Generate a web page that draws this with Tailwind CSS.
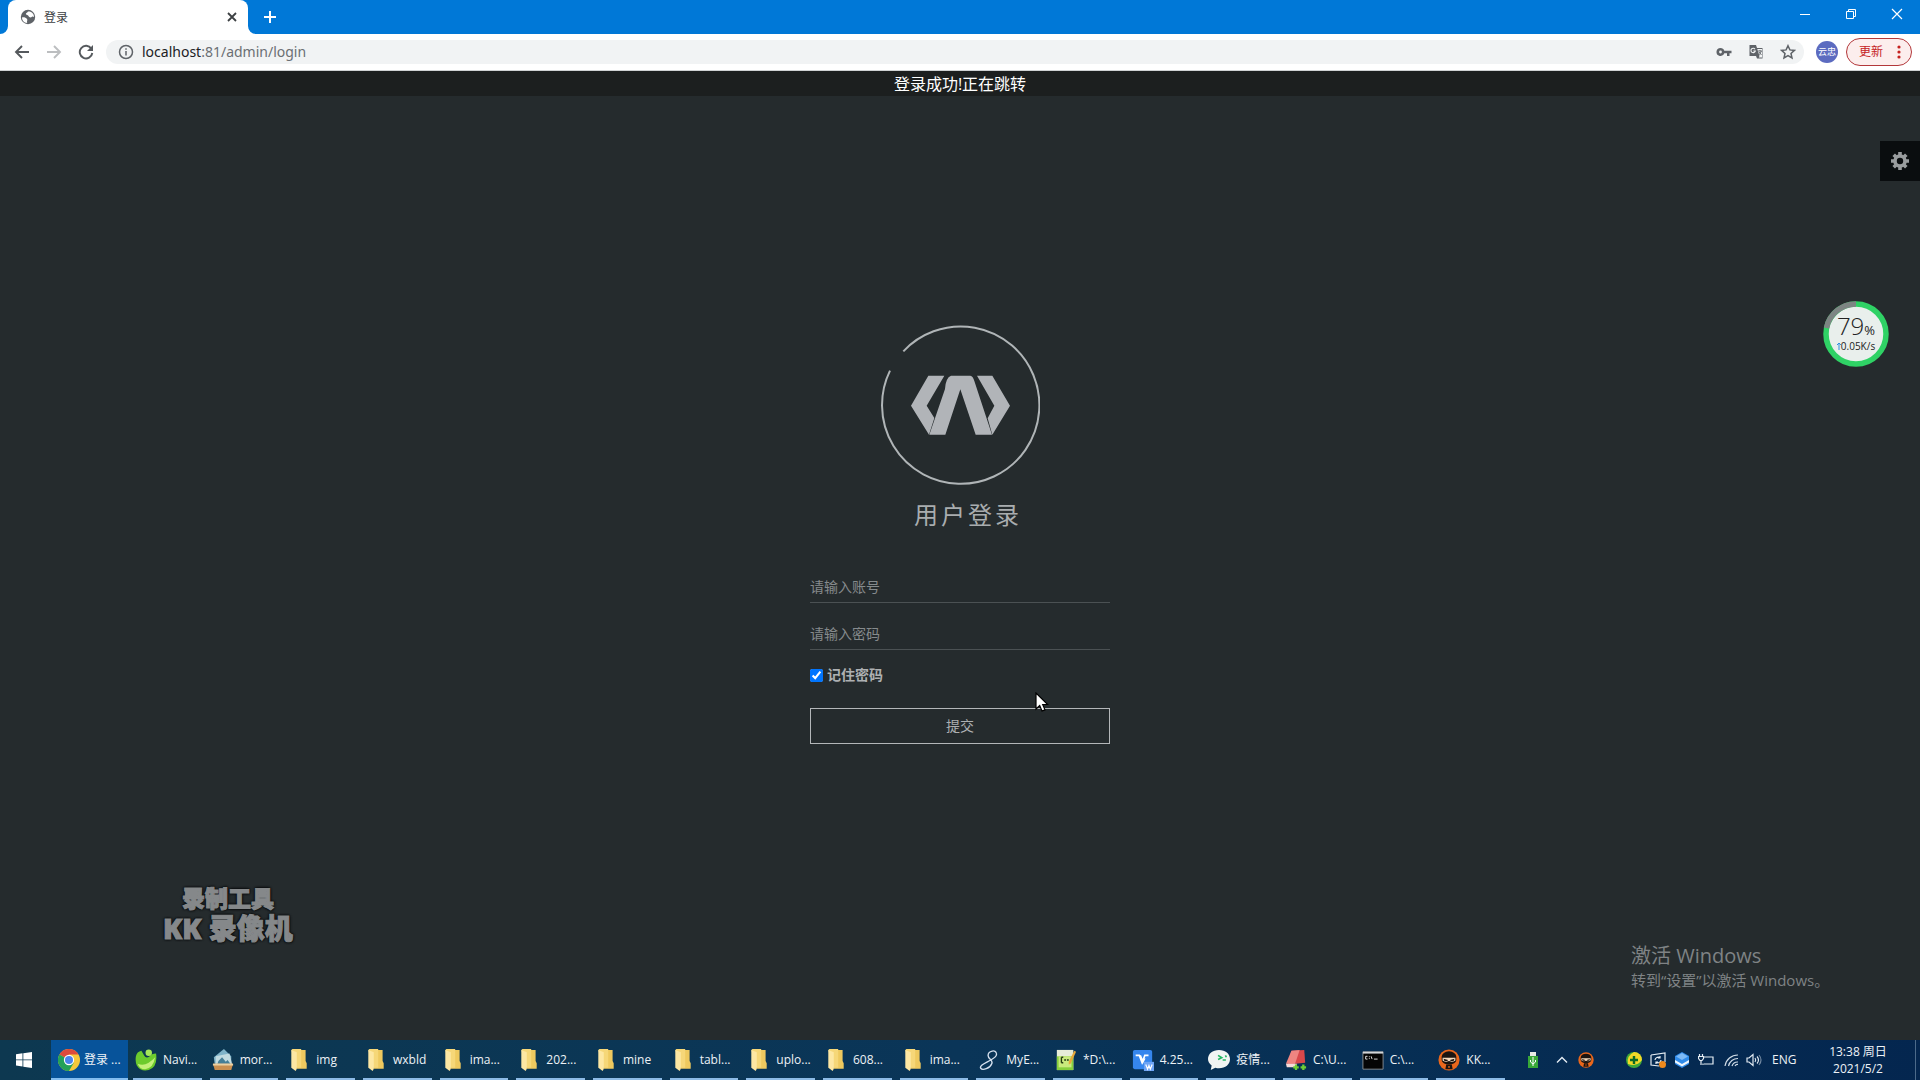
<!DOCTYPE html>
<html lang="zh-CN">
<head>
<meta charset="utf-8">
<title>登录</title>
<script src="https://cdn.jsdelivr.net/npm/@tailwindcss/browser@4"></script>
</head>
<body class="flex h-screen flex-col overflow-hidden bg-[#252b2d] font-['Open_Sans','Noto_Sans_CJK_SC',sans-serif]">

<svg class="hidden">
  <symbol id="folder" viewBox="0 0 14 20">
    <path d="M1 1h12v10l1 2v5H5z" fill="#eec95f"/>
    <path d="M0 1l1-1h8v17l-5 0z" fill="#f6d778"/>
    <path d="M0 1l5 2v15l-1 2-4-3z" fill="#fde7a3"/>
  </symbol>
  <symbol id="ninja" viewBox="0 0 24 24">
    <circle cx="12" cy="12" r="11.500" fill="#e9671c"/>
    <path d="M4 8.500a8 6 0 0 1 16 0v3.500a8 5 0 0 1-16 0z" fill="#1b1410"/>
    <path d="M5 9.500h14v3q-2 1.500-4 1.500l-3-1-3 1q-2 0-4-1.500z" fill="#f3d9bd"/>
    <path d="M6 10.500l5 1.500-1 1H7zM18 10.500l-5 1.500 1 1h3z" fill="#1b1410"/>
    <path d="M9 17h6l1 5H8z" fill="#1b1410"/>
    <circle cx="12" cy="19.500" r="1" fill="#e9671c"/>
  </symbol>
</svg>

<header>
  <div class="flex h-[34px] items-stretch bg-[#0078d7] pl-2">
    <div class="relative flex w-60 items-center rounded-t-lg bg-white pr-2 pl-3">
      <svg class="absolute bottom-0 -left-2 size-2" viewBox="0 0 8 8"><path d="M8 0v8H0a8 8 0 0 0 8-8" fill="#fff"/></svg>
      <svg class="absolute -right-2 bottom-0 size-2" viewBox="0 0 8 8"><path d="M0 0v8h8a8 8 0 0 1-8-8" fill="#fff"/></svg>
      <svg class="size-4" viewBox="0 0 16 16"><circle cx="8" cy="8" r="7.200" fill="#5f6368"/><path d="M2 8.500c2-.5 4 .2 5 1.500 1 1-.5 2 .2 4C4 13.800 2 11.500 2 8.500M8 2.500c-.5 1.500-2 1-2.200 2.500C6 6.200 8 5.500 8.500 7c.4 1.500 2.500 2 3.500.8.700-.8 1.500-.3 2 .2.200-3-2.500-6-6-5.500" fill="#fff"/></svg>
      <span class="flex-1 pt-0.5 pl-2 text-xs text-[#3c4043]">登录</span>
      <button aria-label="关闭标签页" class="flex size-4 items-center justify-center"><svg class="size-4" viewBox="0 0 16 16" fill="none" stroke="#3c4043" stroke-width="1.800"><path d="M4 4l8 8M12 4l-8 8"/></svg></button>
    </div>
    <button aria-label="新标签页" class="ml-3.5 flex w-4 items-center"><svg class="size-4" viewBox="0 0 16 16" stroke="#fff" stroke-width="2"><path d="M8 2v12M2 8h12"/></svg></button>
    <div class="ml-auto flex">
      <button aria-label="最小化" class="flex w-[46px] items-center justify-center pb-1.5"><svg class="size-3" viewBox="0 0 12 12" stroke="#fff"><path d="M1 6.500h10"/></svg></button>
      <button aria-label="还原" class="flex w-[46px] items-center justify-center pb-1.5"><svg class="size-3" viewBox="0 0 12 12" fill="none" stroke="#fff"><path d="M1.500 3.500h7v7h-7zM3.500 3.500v-2h7v7h-2"/></svg></button>
      <button aria-label="关闭" class="flex w-[46px] items-center justify-center pb-1.5"><svg class="size-3" viewBox="0 0 12 12" stroke="#fff" stroke-width="1.200"><path d="M1 1l10 10M11 1L1 11"/></svg></button>
    </div>
  </div>
  <div class="flex h-[37px] items-center gap-4 border-b border-[#cfd2d3] bg-white pr-2 pl-3.5">
    <button aria-label="后退"><svg class="size-4" viewBox="0 0 16 16" fill="none" stroke="#55595d" stroke-width="1.900"><path d="M15 8H2.500M8 2L2 8l6 6"/></svg></button>
    <button aria-label="前进"><svg class="size-4" viewBox="0 0 16 16" fill="none" stroke="#bcbec0" stroke-width="1.900"><path d="M1 8h12.500M8 2l6 6-6 6"/></svg></button>
    <button aria-label="重新加载"><svg class="size-4" viewBox="0 0 16 16"><path d="M13.300 4.600A6.300 6.300 0 1 0 14.300 9" fill="none" stroke="#55595d" stroke-width="1.900"/><path d="M15 1v6H9z" fill="#55595d"/></svg></button>
    <div class="-ml-1 flex h-6 flex-1 items-center rounded-full bg-[#f1f3f4] pr-2 pl-3">
      <svg class="mr-2 size-4" viewBox="0 0 16 16" fill="none" stroke="#5f6368" stroke-width="1.500"><circle cx="8" cy="8" r="6.500"/><path d="M8 7v4.500M8 4.200v1.600"/></svg>
      <span class="flex-1 font-['Noto_Sans',sans-serif] text-sm text-[#6b6f73]"><span class="text-[#202124]">localhost</span>:81/admin/login</span>
      <div class="flex items-center gap-4">
        <svg class="size-4" viewBox="0 0 16 16"><path d="M4.500 4a4 4 0 1 0 3.800 5.200H11V12h2.500V9.200H15.500V6.800H8.300A4 4 0 0 0 4.500 4m0 2.600a1.400 1.400 0 1 1 0 2.800 1.400 1.400 0 0 1 0-2.800" fill="#5f6368"/></svg>
        <svg class="size-4" viewBox="0 0 16 16"><path d="M1.500 1H8l1 3h5.500v10.500H9L8 12H1.500z" fill="#5f6368"/><path d="M9.300 5H14v8.500h-3.200L11.500 12z" fill="#f1f3f4"/><path d="M7 5.200A2.200 2.200 0 1 0 7.300 7H5.300" fill="none" stroke="#f1f3f4" stroke-width="1.100"/><path d="M10 7h4M12 6v1M13.300 7q-.6 2.500-2.600 4M11 8l2.500 3" fill="none" stroke="#5f6368" stroke-width=".9"/></svg>
        <svg class="size-4" viewBox="0 0 16 16" fill="none" stroke="#5f6368" stroke-width="1.500"><path d="M8 1.700l1.900 4.200 4.500.5-3.400 3.100 1 4.500L8 11.700 4 14l1-4.500L1.600 6.400l4.500-.5z"/></svg>
      </div>
    </div>
    <div class="-ml-1 flex items-center gap-2">
      <span class="flex size-[22px] items-center justify-center rounded-full bg-[#5c6bc0] text-[9px] text-white">云忠</span>
      <button class="flex h-7 w-[66px] items-center justify-between rounded-full border border-[#b3373a] bg-[#fceeed] pr-2.5 pl-3 text-xs text-[#c5221f]">更新
        <svg class="h-4 w-1" viewBox="0 0 4 16" fill="#c5221f"><circle cx="2" cy="3" r="1.600"/><circle cx="2" cy="8" r="1.600"/><circle cx="2" cy="13" r="1.600"/></svg>
      </button>
    </div>
  </div>
</header>

<main class="relative flex-1 text-[#adb0b2]">
  <p class="flex h-[25px] items-center justify-center bg-[#1c1f1f] text-base leading-none text-white">登录成功!正在跳转</p>

  <form class="mx-auto flex w-[300px] flex-col items-stretch pt-[229px] text-sm">
    <svg class="size-40 self-center" viewBox="271 75 480 480">
      <path d="M343 151A236 236 0 1 1 303 209" fill="none" stroke="#b0b5b7" stroke-width="6" transform="translate(-2 3)"/>
      <g fill="#b1b4b8">
        <path d="M416 227h48l-53 90 23 37-16 50-54-87z"/>
        <path d="M466 267q2-34 18-40h58q8 1 12 16l53 161h-49l-46-136-45 136h-48z"/>
        <path d="M562 227h46l53 90-53 87-14-49 20-38z"/>
      </g>
    </svg>
    <h1 class="mt-3 pl-4 text-center text-2xl leading-9 font-normal tracking-[3px] text-[#a9adaf]">用户登录</h1>
    <input type="text" aria-label="账号" placeholder="请输入账号" class="mt-[38px] h-8 border-b border-[#4b5153] bg-transparent outline-none placeholder:text-[#858a8c]">
    <input type="password" aria-label="密码" placeholder="请输入密码" class="mt-[15px] h-8 border-b border-[#4b5153] bg-transparent outline-none placeholder:text-[#858a8c]">
    <div class="mt-[15px] flex h-5 items-center gap-1">
      <input id="remember" type="checkbox" checked class="size-[13px] accent-[#0075ff]">
      <label for="remember" class="font-bold">记住密码</label>
    </div>
    <button type="button" class="mt-[23px] h-9 border border-[#b4b7b9]">提交</button>
  </form>

  <button aria-label="设置" class="absolute top-[70px] right-0 flex size-10 items-center justify-center bg-[#0a0d0f]">
    <svg class="size-[18px]" viewBox="0 0 18 18"><circle cx="9" cy="9" r="5" fill="none" stroke="#999c9e" stroke-width="3.600"/><path d="M9 0v4M9 14v4M0 9h4M14 9h4M2.700 2.700l2.600 2.600M12.700 12.700l2.600 2.600M15.300 2.700l-2.600 2.600M5.300 12.700l-2.600 2.600" stroke="#999c9e" stroke-width="3.600"/></svg>
  </button>

  <div class="absolute top-[230px] right-[31px] flex size-[66px] flex-col items-center justify-center text-[#222]">
    <svg class="absolute inset-0 size-full" viewBox="0 0 66 66"><circle cx="33" cy="33" r="30" fill="#e9efec" stroke="#2fd265" stroke-width="5.500"/><path d="M3.500 27A30 30 0 0 1 33 3" fill="none" stroke="#7d8583" stroke-width="5.500"/></svg>
    <div class="relative flex items-baseline leading-none"><span class="text-2xl leading-6 font-light">79</span><span class="text-[13px]">%</span></div>
    <div class="relative flex items-center text-[10px] leading-4"><svg class="h-2 w-1" viewBox="0 0 4 8" stroke="#2f8fe0" fill="none"><path d="M2 8V1M0 3l2-2 2 2"/></svg>0.05K/s</div>
  </div>

  <div class="absolute bottom-24 left-[163px] text-center font-black text-[#85888a] [-webkit-text-stroke:1px_#85888a] [text-shadow:1px_1px_2px_#0c0f10,-1px_-1px_2px_#0c0f10,1px_-1px_2px_#0c0f10,-1px_1px_2px_#0c0f10]">
    <div class="text-[23px] leading-7">录制工具</div>
    <div class="text-[28px] leading-8">KK 录像机</div>
  </div>

  <div class="absolute right-[89px] bottom-[50px] w-[200px] text-[#7f8385]">
    <div class="text-xl leading-7">激活 Windows</div>
    <div class="text-[15px] leading-5">转到“设置”以激活 Windows。</div>
  </div>

  <svg class="absolute top-[621px] left-1/2 ml-[75px] h-5 w-3.5" viewBox="0 0 14 20"><path d="M1 1v16l3.700-3.500L7 19l3-1.200L7.700 12.500h5z" fill="#fff" stroke="#000" stroke-width="1.200"/></svg>
</main>

<footer class="flex h-10 items-stretch bg-linear-to-r from-[#0d3850] via-[#0a3558] to-[#04264f] text-xs text-[#edf2f6]">
  <button aria-label="开始" class="flex w-[51px] items-center justify-center pr-1"><svg class="size-4" viewBox="0 0 16 16" fill="#fff"><path d="M0 2.200l6.500-.9v6.200H0zM7.300 1.200L16 0v7.500H7.300zM0 8.300h6.500v6.200L0 13.600zM7.300 8.300H16V16l-8.700-1.200z"/></svg></button>
  <button class="mr-[5px] flex w-[77px] items-center gap-1 border-b-2 border-[#83bdf0] bg-[#07539a] pt-0.5 pl-[7px]">
    <svg class="size-[22px]" viewBox="0 0 24 24"><circle cx="12" cy="12" r="12" fill="#f5c83a"/><path d="M12 12L1.600 6A12 12 0 0 1 22.400 6H12z" fill="#db4a3d"/><path d="M1.600 6A12 12 0 0 0 12 24l5.200-9L12 12z" fill="#23a15a"/><circle cx="12" cy="12" r="5.600" fill="#fff"/><circle cx="12" cy="12" r="4.400" fill="#4a84ee"/></svg>
    登录 ...
  </button>
  <nav class="grid w-[1372px] shrink grid-cols-18 gap-2 *:flex *:min-w-0 *:items-center *:gap-1.5 *:border-b-2 *:border-[#8dbbe6] *:pt-0.5 *:pl-0.5 *:whitespace-nowrap [&_svg]:h-[22px] [&_svg]:w-[22px] [&_svg]:shrink-0">
    <button><svg viewBox="0 0 24 24"><path d="M1 8q1-5 6-6l3 5q2 4 6 1 2-3 7-3 2 15-8 18-9 2-13-5-2-5-1-10" fill="#6ccb2d"/><path d="M3 16q9 4 19-7-2 12-11 13-6 0-8-6" fill="#c3f07a"/><circle cx="15" cy="4" r="3.500" fill="#a5e65a"/></svg>Navi...</button>
    <button><svg viewBox="0 0 24 24"><path d="M2 9L13 0l8 8v9H3z" fill="#7fb3c8"/><path d="M4 8l15-3 3 12H4z" fill="#c2dbe0"/><path d="M7 13l4-4 4 5 2-2 3 4H6z" fill="#457f97"/><path d="M1 16h22l-2 7H3z" fill="#c98f50"/><path d="M1 16h22v2H1z" fill="#ecd0a0"/></svg>mor...</button>
    <button><svg><use href="#folder"/></svg>img</button>
    <button><svg><use href="#folder"/></svg>wxbld</button>
    <button><svg><use href="#folder"/></svg>ima...</button>
    <button><svg><use href="#folder"/></svg>202...</button>
    <button><svg><use href="#folder"/></svg>mine</button>
    <button><svg><use href="#folder"/></svg>tabl...</button>
    <button><svg><use href="#folder"/></svg>uplo...</button>
    <button><svg><use href="#folder"/></svg>608...</button>
    <button><svg><use href="#folder"/></svg>ima...</button>
    <button><svg viewBox="0 0 24 24" fill="none" stroke="#d5e0ee" stroke-width="1.500"><path d="M20 5c0-5-9-3-9 2 0 4 6 5 4 9-2 5-10 8-12 5s6-6 11-9 7-5 6-7"/></svg>MyE...</button>
    <button><svg viewBox="0 0 24 24"><path d="M2 1h18v22H2z" fill="#e6ecd8"/><path d="M2 8h18v15H2z" fill="#86cf3c"/><path d="M4 8h14v12H4z" fill="#c9ea7d"/><path d="M7 9v6M7 9h2M7 15h2M10 12h2M13 12h2" stroke="#243b12" stroke-width="1.500"/><path d="M21 2l2 1-6 13-2 1v-3z" fill="#e8a93a"/></svg>*D:\...</button>
    <button><svg viewBox="0 0 24 24"><rect x="1" y="1" width="21" height="21" rx="2" fill="#3586ee"/><path d="M4 7h4l3 8 3-8h4M9 7l3 7 2-4" fill="none" stroke="#fff" stroke-width="1.800"/><rect x="13" y="14" width="11" height="10" fill="#6ea4f4"/><path d="M15 17l2 5 1.500-4 1.500 4 2-5" fill="none" stroke="#fff" stroke-width="1.300"/></svg>4.25...</button>
    <button><svg viewBox="0 0 24 24"><path d="M12 1c7 0 12 4 12 10s-5 10-12 10q-2 0-4-.6L3 23l1-5Q0 15 0 11C0 5 5 1 12 1" fill="#f2f5f4"/><path d="M11 7l4 2.500-4 2M16 12h3.500M19 7l1 2" fill="none" stroke="#25b864" stroke-width="1.800"/></svg>疫情...</button>
    <button><svg viewBox="0 0 24 24"><path d="M7 2l14-1 1 14-19 2z" fill="#d9484b"/><path d="M7 2l9-1-5 15H1z" fill="#ef8581"/><path d="M1 16h12l-1 4H2z" fill="#f5dada"/><path d="M9 20h6M12 17v6M17 20h6M20 17v6" stroke="#6fce35" stroke-width="2.500"/></svg>C:\U...</button>
    <button><svg viewBox="0 0 24 24"><path d="M1 3h22v19H1z" fill="#050505" stroke="#8b9095"/><path d="M1 3h22v2H1z" fill="#d3d6d9"/><path d="M6 8H4v3h2M8 8v1M8 10v1M10 8l1 3M13 11h4" fill="none" stroke="#e9e9e9"/></svg>C:\...</button>
    <button><svg><use href="#ninja"/></svg>KK...</button>
  </nav>

  <div class="ml-auto flex items-center">
    <svg class="mr-[18px] h-4 w-2.5" viewBox="0 0 10 16"><path d="M2 0h6v4H2z" fill="#e6ebe6"/><path d="M0 4h10v12H0z" fill="#38a838"/><path d="M5 5v9M2.500 8v2L5 12l2.500-2V8" fill="none" stroke="#fff"/></svg>
    <svg class="mr-2.5 h-4 w-3" viewBox="0 0 12 16" fill="none" stroke="#e5edf4" stroke-width="1.400"><path d="M1 10.500l5-5 5 5"/></svg>
    <svg class="mr-8 size-4"><use href="#ninja"/></svg>
    <svg class="mr-2 size-4" viewBox="0 0 16 16"><circle cx="8" cy="8" r="8" fill="#3fa83a"/><path d="M8 0a8 8 0 0 1 8 8q-5 7-14 4Q0 4 8 0" fill="#f2d928"/><path d="M8 4v8M4 8h8" stroke="#0c6a25" stroke-width="2.400"/></svg>
    <svg class="mr-2 size-4" viewBox="0 0 16 16" fill="none" stroke="#e5edf4" stroke-width="1.200"><path d="M1 3l14-2v9M1 3v10l8 1M5 8a3 3 0 0 1 5-2M10 4v2H8M11 8a3 3 0 0 1-5 2M6 12v-2h2"/><circle cx="12.500" cy="12.500" r="3.500" fill="#f08a1c" stroke="none"/></svg>
    <svg class="mr-2 size-4" viewBox="0 0 16 16"><path d="M8 0l7 4v8l-7 4-7-4V4z" fill="#2f8bea"/><path d="M8 1l6 3.500L8 8 2 4.500z" fill="#7db9f5"/><path d="M1 8l7 4 7-4v2.500l-7 4-7-4z" fill="#eef6fd"/></svg>
    <svg class="mr-2.5 size-4" viewBox="0 0 16 16" fill="none" stroke="#e5edf4" stroke-width="1.200"><path d="M5 11.500V13M6 5h9v7H6M1.500 2v2M4.500 2v2M.5 4.500h5v2l-1.500 2H2L.5 6.500zM3 8.500V13"/></svg>
    <svg class="mr-1.5 size-4" viewBox="0 0 16 16" fill="none" stroke="#cfdbe6" stroke-width="1.200"><path d="M1 14A13 13 0 0 1 14 3M4.500 14A9.500 9.500 0 0 1 14 6.500M8 14a6 6 0 0 1 6-4M11 14a3 3 0 0 1 3-1.500"/></svg>
    <svg class="mr-2.5 size-4" viewBox="0 0 16 16" fill="none" stroke="#dfe8f0" stroke-width="1.200"><path d="M1 6h2l4-3.500v11L3 10H1zM9 6q1.500 2 0 4M11 4.500q3 3.500 0 7"/><path d="M13 3q4 5 0 10" opacity=".5"/></svg>
    <span class="w-14">ENG</span>
    <time class="w-[60px] text-center leading-[17px]">13:38 周日<br>2021/5/2</time>
    <div class="ml-[27px] h-full w-[5px] border-l border-[#4c6a8a]"></div>
  </div>
</footer>
</body>
</html>
